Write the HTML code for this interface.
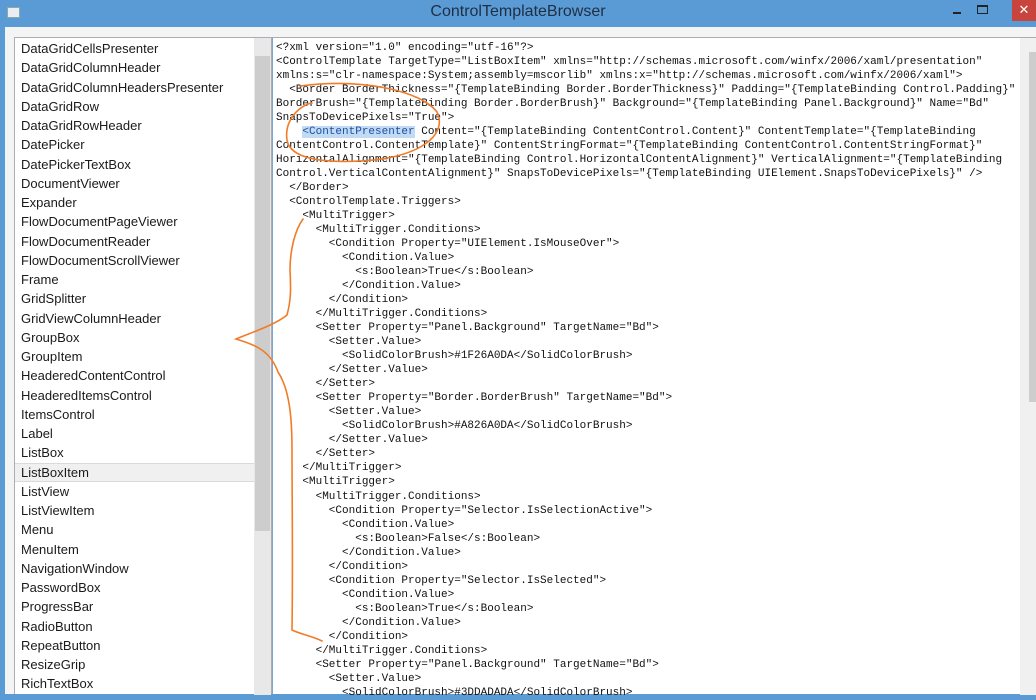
<!DOCTYPE html>
<html><head><meta charset="utf-8"><style>
*{margin:0;padding:0;box-sizing:border-box}
body{width:1036px;height:694px;overflow:hidden;background:#5b9bd5;position:relative;font-family:"Liberation Sans",sans-serif}
#title{position:absolute;left:0;top:0;width:1036px;height:27px;background:#5b9bd5}
#title .t{position:absolute;left:0;width:1036px;top:3px;text-align:center;font-size:16px;color:#1e2f45}
#icon{position:absolute;left:7px;top:7px;width:13px;height:11px;background:#e8eef4;border:1px solid #8aa}
#min{position:absolute;left:953px;top:12px;width:8px;height:2px;background:#222}
#max{position:absolute;left:977px;top:5px;width:11px;height:9px;border:1px solid #222;border-top-width:2px}
#close{position:absolute;left:1012px;top:0;width:24px;height:21px;background:#c7453c;color:#fff;font-size:13px;text-align:center;line-height:20px}
#body{position:absolute;left:5px;top:27px;width:1031px;height:667px;background:#f4f4f4}
#left{position:absolute;left:14px;top:37px;width:258px;height:657px;background:#fff;border:1px solid #abadb3;border-bottom:none;padding-top:1px}
#left .it{height:19.25px;line-height:19.25px;font-size:13px;color:#1a1a1a;padding-left:6px;white-space:nowrap}
#left .sel{background:#f0f0f0;border-top:1px solid #dadada;border-bottom:1px solid #dadada;line-height:17px}
#ls{position:absolute;left:239px;top:0;width:17px;height:657px;background:#e8e8e8}
#lthumb{position:absolute;left:1px;top:18px;width:15px;height:475px;background:#cdcdcd}
#right{position:absolute;left:272px;top:37px;width:764px;height:657px;background:#fff;border-left:1px solid #7aa7d6;border-top:1px solid #abadb3}
#code{position:absolute;left:3px;top:3px;font-family:"Liberation Mono",monospace;font-size:11px;line-height:14.02px;color:#111;white-space:pre}
.hl{background:#c1dbf5;color:#1f4fa0}
#rs{position:absolute;left:747px;top:0;width:17px;height:657px;background:#f0f0f0}
#rthumb{position:absolute;left:9px;top:14px;width:8px;height:350px;background:#cdcdcd}
svg{position:absolute;left:0;top:0}
</style></head><body>
<div id="title"><div id="icon"></div><div class="t">ControlTemplateBrowser</div><div id="min"></div><div id="max"></div><div id="close">✕</div></div>
<div id="body"></div>
<div id="left">
<div class="it">DataGridCellsPresenter</div>
<div class="it">DataGridColumnHeader</div>
<div class="it">DataGridColumnHeadersPresenter</div>
<div class="it">DataGridRow</div>
<div class="it">DataGridRowHeader</div>
<div class="it">DatePicker</div>
<div class="it">DatePickerTextBox</div>
<div class="it">DocumentViewer</div>
<div class="it">Expander</div>
<div class="it">FlowDocumentPageViewer</div>
<div class="it">FlowDocumentReader</div>
<div class="it">FlowDocumentScrollViewer</div>
<div class="it">Frame</div>
<div class="it">GridSplitter</div>
<div class="it">GridViewColumnHeader</div>
<div class="it">GroupBox</div>
<div class="it">GroupItem</div>
<div class="it">HeaderedContentControl</div>
<div class="it">HeaderedItemsControl</div>
<div class="it">ItemsControl</div>
<div class="it">Label</div>
<div class="it">ListBox</div>
<div class="it sel">ListBoxItem</div>
<div class="it">ListView</div>
<div class="it">ListViewItem</div>
<div class="it">Menu</div>
<div class="it">MenuItem</div>
<div class="it">NavigationWindow</div>
<div class="it">PasswordBox</div>
<div class="it">ProgressBar</div>
<div class="it">RadioButton</div>
<div class="it">RepeatButton</div>
<div class="it">ResizeGrip</div>
<div class="it">RichTextBox</div>
<div id="ls"><div id="lthumb"></div></div>
</div>
<div id="right"><div id="code">&lt;?xml version="1.0" encoding="utf-16"?&gt;
&lt;ControlTemplate TargetType="ListBoxItem" xmlns="http://schemas.microsoft.com/winfx/2006/xaml/presentation"
xmlns:s="clr-namespace:System;assembly=mscorlib" xmlns:x="http://schemas.microsoft.com/winfx/2006/xaml"&gt;
  &lt;Border BorderThickness="{TemplateBinding Border.BorderThickness}" Padding="{TemplateBinding Control.Padding}"
BorderBrush="{TemplateBinding Border.BorderBrush}" Background="{TemplateBinding Panel.Background}" Name="Bd"
SnapsToDevicePixels="True"&gt;
    <span class="hl">&lt;ContentPresenter</span> Content="{TemplateBinding ContentControl.Content}" ContentTemplate="{TemplateBinding
ContentControl.ContentTemplate}" ContentStringFormat="{TemplateBinding ContentControl.ContentStringFormat}"
HorizontalAlignment="{TemplateBinding Control.HorizontalContentAlignment}" VerticalAlignment="{TemplateBinding
Control.VerticalContentAlignment}" SnapsToDevicePixels="{TemplateBinding UIElement.SnapsToDevicePixels}" /&gt;
  &lt;/Border&gt;
  &lt;ControlTemplate.Triggers&gt;
    &lt;MultiTrigger&gt;
      &lt;MultiTrigger.Conditions&gt;
        &lt;Condition Property="UIElement.IsMouseOver"&gt;
          &lt;Condition.Value&gt;
            &lt;s:Boolean&gt;True&lt;/s:Boolean&gt;
          &lt;/Condition.Value&gt;
        &lt;/Condition&gt;
      &lt;/MultiTrigger.Conditions&gt;
      &lt;Setter Property="Panel.Background" TargetName="Bd"&gt;
        &lt;Setter.Value&gt;
          &lt;SolidColorBrush&gt;#1F26A0DA&lt;/SolidColorBrush&gt;
        &lt;/Setter.Value&gt;
      &lt;/Setter&gt;
      &lt;Setter Property="Border.BorderBrush" TargetName="Bd"&gt;
        &lt;Setter.Value&gt;
          &lt;SolidColorBrush&gt;#A826A0DA&lt;/SolidColorBrush&gt;
        &lt;/Setter.Value&gt;
      &lt;/Setter&gt;
    &lt;/MultiTrigger&gt;
    &lt;MultiTrigger&gt;
      &lt;MultiTrigger.Conditions&gt;
        &lt;Condition Property="Selector.IsSelectionActive"&gt;
          &lt;Condition.Value&gt;
            &lt;s:Boolean&gt;False&lt;/s:Boolean&gt;
          &lt;/Condition.Value&gt;
        &lt;/Condition&gt;
        &lt;Condition Property="Selector.IsSelected"&gt;
          &lt;Condition.Value&gt;
            &lt;s:Boolean&gt;True&lt;/s:Boolean&gt;
          &lt;/Condition.Value&gt;
        &lt;/Condition&gt;
      &lt;/MultiTrigger.Conditions&gt;
      &lt;Setter Property="Panel.Background" TargetName="Bd"&gt;
        &lt;Setter.Value&gt;
          &lt;SolidColorBrush&gt;#3DDADADA&lt;/SolidColorBrush&gt;</div>
<div id="rs"><div id="rthumb"></div></div>
</div>
<svg width="1036" height="694" viewBox="0 0 1036 694">
<g fill="none" stroke="#f07c28" stroke-width="1.6" stroke-linecap="round">
<path d="M300,86 C360,78 420,90 437,112 C448,135 420,158 360,161 C320,163 290,158 287,140 C284,120 300,105 312,103"/>
<path d="M303,219 C295,230 290,250 290,270 C291,290 291,300 287,315 C275,325 250,333 236,339 C255,345 270,350 278,372 C290,390 292,420 292,450 C292,500 293,560 292,630 C300,634 312,636 322,641"/>
</g>
</svg>
</body></html>
